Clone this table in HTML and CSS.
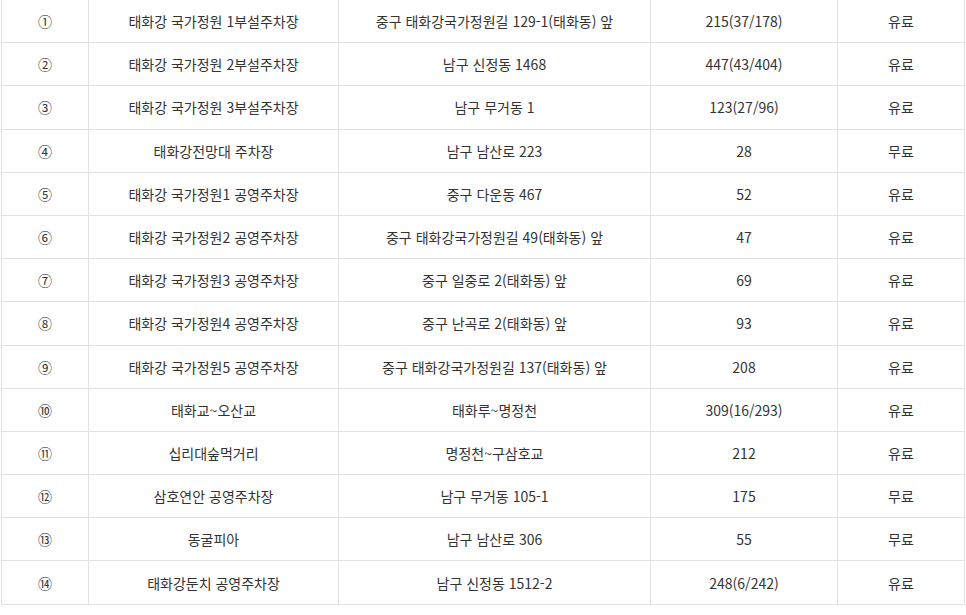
FILE: index.html
```html
<!DOCTYPE html>
<html lang="ko">
<head>
<meta charset="utf-8">
<link rel="stylesheet" href="styles.css">
</head>
<body>
<div class="wrap">
<table class="parking">
<colgroup>
<col class="c-no"><col class="c-name"><col class="c-addr"><col class="c-count"><col class="c-fee">
</colgroup>
<tbody>
<tr><td>①</td><td>태화강 국가정원 1부설주차장</td><td>중구 태화강국가정원길 129-1(태화동) 앞</td><td>215(37/178)</td><td>유료</td></tr>
<tr><td>②</td><td>태화강 국가정원 2부설주차장</td><td>남구 신정동 1468</td><td>447(43/404)</td><td>유료</td></tr>
<tr><td>③</td><td>태화강 국가정원 3부설주차장</td><td>남구 무거동 1</td><td>123(27/96)</td><td>유료</td></tr>
<tr><td>④</td><td>태화강전망대 주차장</td><td>남구 남산로 223</td><td>28</td><td>무료</td></tr>
<tr><td>⑤</td><td>태화강 국가정원1 공영주차장</td><td>중구 다운동 467</td><td>52</td><td>유료</td></tr>
<tr><td>⑥</td><td>태화강 국가정원2 공영주차장</td><td>중구 태화강국가정원길 49(태화동) 앞</td><td>47</td><td>유료</td></tr>
<tr><td>⑦</td><td>태화강 국가정원3 공영주차장</td><td>중구 일중로 2(태화동) 앞</td><td>69</td><td>유료</td></tr>
<tr><td>⑧</td><td>태화강 국가정원4 공영주차장</td><td>중구 난곡로 2(태화동) 앞</td><td>93</td><td>유료</td></tr>
<tr><td>⑨</td><td>태화강 국가정원5 공영주차장</td><td>중구 태화강국가정원길 137(태화동) 앞</td><td>208</td><td>유료</td></tr>
<tr><td>⑩</td><td>태화교~오산교</td><td>태화루~명정천</td><td>309(16/293)</td><td>유료</td></tr>
<tr><td>⑪</td><td>십리대숲먹거리</td><td>명정천~구삼호교</td><td>212</td><td>유료</td></tr>
<tr><td>⑫</td><td>삼호연안 공영주차장</td><td>남구 무거동 105-1</td><td>175</td><td>무료</td></tr>
<tr><td>⑬</td><td>동굴피아</td><td>남구 남산로 306</td><td>55</td><td>무료</td></tr>
<tr><td>⑭</td><td>태화강둔치 공영주차장</td><td>남구 신정동 1512-2</td><td>248(6/242)</td><td>유료</td></tr>
</tbody>
</table>
</div>
</body>
</html>
```

FILE: styles.css
```css
html, body {
  margin: 0;
  padding: 0;
  background: #ffffff;
}
.wrap {
  padding-left: 1px;
  margin-top: -1px;
}
.parking {
  border-collapse: collapse;
  table-layout: fixed;
  width: 964px;
  font-family: "Noto Sans CJK KR", "Noto Sans", sans-serif;
  font-size: 14px;
  color: #333333;
}
.c-no { width: 87px; }
.c-name { width: 250px; }
.c-addr { width: 312px; }
.c-count { width: 187px; }
.c-fee { width: 127px; }
.parking tr {
  height: 43.2px;
}
.parking td {
  border: 1px solid #e2e2e2;
  text-align: center;
  vertical-align: middle;
  padding: 0;
  white-space: nowrap;
}
```
